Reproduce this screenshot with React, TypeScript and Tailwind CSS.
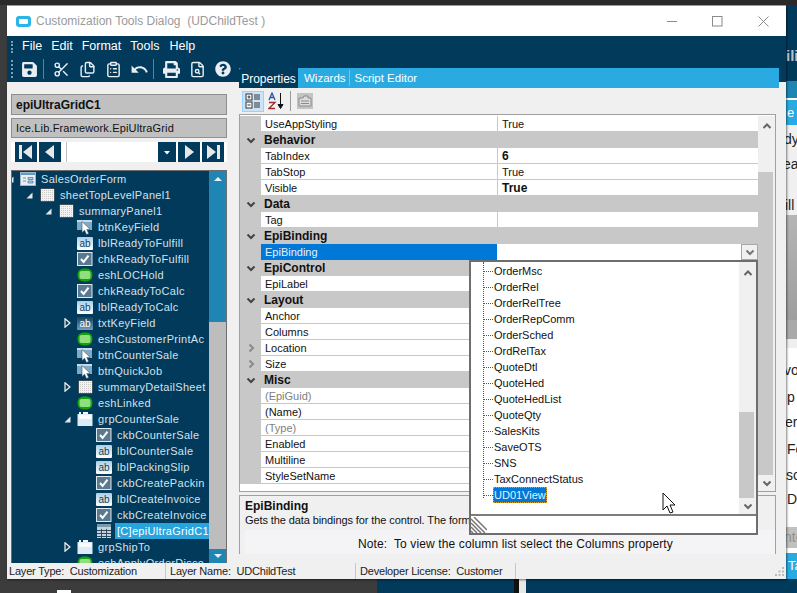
import { Scissors, Files, ClipboardList, FileSearch } from 'lucide-react';
import { FaSave, FaPrint, FaQuestionCircle } from 'react-icons/fa';
import { MdUndo } from 'react-icons/md';

type IconKind = 'form' | 'panel' | 'button' | 'label' | 'text' | 'check' | 'pill' | 'group' | 'grid';

const treeRows: { label: string; level: number; icon: IconKind; exp?: 'open' | 'closed'; selected?: boolean }[] = [
  { label: 'SalesOrderForm', level: 0, icon: 'form', exp: 'open' },
  { label: 'sheetTopLevelPanel1', level: 1, icon: 'panel', exp: 'open' },
  { label: 'summaryPanel1', level: 2, icon: 'panel', exp: 'open' },
  { label: 'btnKeyField', level: 3, icon: 'button' },
  { label: 'lblReadyToFulfill', level: 3, icon: 'label' },
  { label: 'chkReadyToFulfill', level: 3, icon: 'check' },
  { label: 'eshLOCHold', level: 3, icon: 'pill' },
  { label: 'chkReadyToCalc', level: 3, icon: 'check' },
  { label: 'lblReadyToCalc', level: 3, icon: 'label' },
  { label: 'txtKeyField', level: 3, icon: 'text', exp: 'closed' },
  { label: 'eshCustomerPrintAc', level: 3, icon: 'pill' },
  { label: 'btnCounterSale', level: 3, icon: 'button' },
  { label: 'btnQuickJob', level: 3, icon: 'button' },
  { label: 'summaryDetailSheet', level: 3, icon: 'panel', exp: 'closed' },
  { label: 'eshLinked', level: 3, icon: 'pill' },
  { label: 'grpCounterSale', level: 3, icon: 'group', exp: 'open' },
  { label: 'ckbCounterSale', level: 4, icon: 'check' },
  { label: 'lblCounterSale', level: 4, icon: 'label' },
  { label: 'lblPackingSlip', level: 4, icon: 'label' },
  { label: 'ckbCreatePackin', level: 4, icon: 'check' },
  { label: 'lblCreateInvoice', level: 4, icon: 'label' },
  { label: 'ckbCreateInvoice', level: 4, icon: 'check' },
  { label: '[C]epiUltraGridC1', level: 4, icon: 'grid', selected: true },
  { label: 'grpShipTo', level: 3, icon: 'group', exp: 'closed' },
  { label: 'eshApplyOrderDisco', level: 3, icon: 'pill' },
];

type Prop = { cat?: boolean; name: string; value?: string; bold?: boolean; muted?: boolean; more?: boolean; selected?: boolean };

const props: Prop[] = [
  { name: 'UseAppStyling', value: 'True' },
  { cat: true, name: 'Behavior' },
  { name: 'TabIndex', value: '6', bold: true },
  { name: 'TabStop', value: 'True' },
  { name: 'Visible', value: 'True', bold: true },
  { cat: true, name: 'Data' },
  { name: 'Tag' },
  { cat: true, name: 'EpiBinding' },
  { name: 'EpiBinding', selected: true },
  { cat: true, name: 'EpiControl' },
  { name: 'EpiLabel' },
  { cat: true, name: 'Layout' },
  { name: 'Anchor' },
  { name: 'Columns' },
  { name: 'Location', more: true },
  { name: 'Size', more: true },
  { cat: true, name: 'Misc' },
  { name: '(EpiGuid)', muted: true },
  { name: '(Name)' },
  { name: '(Type)', muted: true },
  { name: 'Enabled' },
  { name: 'Multiline' },
  { name: 'StyleSetName' },
];

const views = [
  'OrderMsc', 'OrderRel', 'OrderRelTree', 'OrderRepComm', 'OrderSched', 'OrdRelTax', 'QuoteDtl',
  'QuoteHed', 'QuoteHedList', 'QuoteQty', 'SalesKits', 'SaveOTS', 'SNS', 'TaxConnectStatus',
];

function TreeIcon({ kind }: { kind: IconKind }) {
  if (kind === 'pill') {
    return (
      <svg width="16" height="14" viewBox="0 0 16 14">
        <rect x="0.5" y="0.5" width="15" height="13" rx="6" fill="#17a00e" />
        <rect x="2.5" y="3" width="11" height="8" rx="2" fill="#8fe07c" />
      </svg>
    );
  }
  if (kind === 'check') {
    return (
      <svg width="16" height="14" viewBox="0 0 16 14">
        <rect x="0.5" y="0.5" width="14.5" height="13" fill="#5c7a8f" stroke="#dfe9f0" />
        <path d="M4 7l2.6 3L11.5 3.6" fill="none" stroke="#fff" strokeWidth="2" />
      </svg>
    );
  }
  if (kind === 'label' || kind === 'text') {
    return (
      <svg width="16" height="13" viewBox="0 0 16 13">
        <defs>
          <linearGradient id="lbl" x1="0" y1="0" x2="0" y2="1">
            <stop offset="0" stopColor="#a9cfe6" />
            <stop offset="1" stopColor="#ffffff" />
          </linearGradient>
          <linearGradient id="txt" x1="0" y1="0" x2="0" y2="1">
            <stop offset="0" stopColor="#17425f" />
            <stop offset="1" stopColor="#6e9fbd" />
          </linearGradient>
        </defs>
        <rect width="16" height="13" rx="1" fill={kind === 'label' ? 'url(#lbl)' : 'url(#txt)'} />
        <text x="8" y="10" textAnchor="middle" fontSize="10" fontFamily="Liberation Sans" fill={kind === 'label' ? '#123f5c' : '#fff'}>ab</text>
      </svg>
    );
  }
  if (kind === 'button') {
    return (
      <svg width="16" height="15" viewBox="0 0 16 15">
        <rect x="0" y="0" width="15" height="10" fill="#7fa9c4" />
        <rect x="0" y="0" width="15" height="2" fill="#c4dbe9" />
        <path d="M5 1.5l0 11 2.6-2.2 1.9 4.2 2.2-1-1.9-4 3.2-.4z" fill="#fff" stroke="#36566b" strokeWidth=".6" />
      </svg>
    );
  }
  if (kind === 'panel') {
    return (
      <svg width="15" height="14" viewBox="0 0 15 14">
        <defs>
          <pattern id="chk" width="2" height="2" patternUnits="userSpaceOnUse">
            <rect width="2" height="2" fill="#f2f2f2" />
            <rect width="1" height="1" fill="#c9c9c9" />
          </pattern>
        </defs>
        <rect x="0.5" y="0.5" width="14" height="13" fill="url(#chk)" stroke="#111" strokeDasharray="1 1" />
      </svg>
    );
  }
  if (kind === 'group') {
    return (
      <svg width="16" height="14" viewBox="0 0 16 14">
        <rect x="0.5" y="2" width="15" height="12" fill="#dcebf5" />
        <rect x="1.5" y="3" width="13" height="4" fill="#f8fbfd" />
        <path d="M2 0h2v2H2zM6 0h5v2H6z" fill="#f0f6fa" />
      </svg>
    );
  }
  if (kind === 'grid') {
    return (
      <svg width="14" height="14" viewBox="0 0 14 14">
        <rect width="14" height="14" fill="#c5d2da" />
        <rect y="0" width="14" height="3" fill="#7e98a8" />
        <path d="M0 6.5h14M0 9.5h14M0 12.5h14M4.5 5v9M9.5 5v9" stroke="#2b4a5e" strokeWidth="1" />
      </svg>
    );
  }
  return (
    <svg width="16" height="14" viewBox="0 0 16 14">
      <rect x="0.5" y="0.5" width="15" height="13" fill="#e8eef2" stroke="#9eb3c2" />
      <rect x="1" y="1" width="14" height="2" fill="#5d9ccb" />
      <path d="M3 6h3M3 9h3M8 5.5h5v2H8zM8 9h5v2H8z" fill="#b7cfe0" stroke="#4d84ad" strokeWidth=".8" />
    </svg>
  );
}

function Expander({ state }: { state?: 'open' | 'closed' }) {
  if (state === 'open') {
    return (
      <svg width="7" height="7" viewBox="0 0 7 7">
        <path d="M6.5 0.5v6h-6z" fill="#e4e4e4" />
      </svg>
    );
  }
  if (state === 'closed') {
    return (
      <svg width="7" height="10" viewBox="0 0 7 10">
        <path d="M1 .8L6 5 1 9.2z" fill="#123f5c" stroke="#f2f2f2" strokeWidth="1.2" />
      </svg>
    );
  }
  return null;
}

function Chevron({ dir, color = '#666', size = 10 }: { dir: 'up' | 'down' | 'right'; color?: string; size?: number }) {
  const d = dir === 'up' ? 'M1.5 7L5 3.5 8.5 7' : dir === 'down' ? 'M1.5 3.5L5 7 8.5 3.5' : 'M3.5 1.5L7 5 3.5 8.5';
  return (
    <svg width={size} height={size} viewBox="0 0 10 10">
      <path d={d} fill="none" stroke={color} strokeWidth="2" />
    </svg>
  );
}

function NavButton({ d, bar }: { d: string; bar?: 'left' | 'right' }) {
  return (
    <div className="flex h-5 w-[22px] items-center justify-center bg-[#023a5c]">
      <svg width="14" height="14" viewBox="0 0 14 14">
        {bar === 'left' && <rect x="0" y="0" width="3" height="14" fill="#e8e8e8" />}
        {bar === 'right' && <rect x="11" y="0" width="3" height="14" fill="#e8e8e8" />}
        <path d={d} fill="#e8e8e8" />
      </svg>
    </div>
  );
}

function ToolButton({ children }: { children: React.ReactNode }) {
  return <div className="flex h-[26px] w-[26px] items-center justify-center text-[#e8eef2]">{children}</div>;
}

function Grip({ className }: { className: string }) {
  return <div className={`w-[2px] border-l-2 border-dotted border-[#7f9db0] ${className}`} />;
}

function TreePanel() {
  return (
    <div className="mt-2 flex min-h-0 flex-1 overflow-hidden border border-b-0 border-[#6d6d6d] bg-[#023a5c]">
      <div className="min-w-0 flex-1 overflow-hidden">
        {treeRows.map((row) => (
          <div
            key={row.label}
            className="flex h-4 shrink-0 items-center whitespace-nowrap"
            style={{ marginLeft: row.level * 19 - 5 }}
          >
            <div className="flex w-[13px] shrink-0 items-center"><Expander state={row.exp} /></div>
            <div className="flex w-4 shrink-0 justify-center"><TreeIcon kind={row.icon} /></div>
            <span
              className={`ml-[3px] flex h-4 items-center px-[2px] text-[11px] tracking-[0.3px] text-[#d3e1e9] ${row.selected ? 'w-[110px] bg-[#29a3dc] text-white' : ''}`}
            >
              {row.label}
            </span>
          </div>
        ))}
      </div>
      <div className="flex w-[17px] shrink-0 flex-col bg-[#bdbdbd]">
        <div className="flex h-[151px] justify-center bg-[#1f86b4] pt-[4px]">
          <svg width="10" height="8" viewBox="0 0 10 8"><path d="M1 6L5 2l4 4z" fill="#e8f2f7" /></svg>
        </div>
        <div className="flex-1" />
        <div className="flex h-[14px] items-center justify-center bg-[#1f86b4]">
          <svg width="10" height="8" viewBox="0 0 10 8"><path d="M1 2l4 4 4-4z" fill="#e8f2f7" /></svg>
        </div>
      </div>
    </div>
  );
}

function LeftPanel() {
  return (
    <div className="flex w-[232px] shrink-0 flex-col">
      <div className="flex h-[26px] items-center bg-[#023a5c] pl-1">
        <Grip className="h-[18px]" />
        <div className="ml-[3px] flex items-center">
          <ToolButton><FaSave size={17} /></ToolButton>
          <div className="mx-[1px] h-[20px] w-px bg-[#5f8096]" />
          <div className="w-[3px]" />
          <ToolButton><Scissors size={17} /></ToolButton>
          <ToolButton><Files size={17} /></ToolButton>
          <ToolButton><ClipboardList size={17} /></ToolButton>
          <ToolButton><MdUndo size={19} /></ToolButton>
          <div className="mx-[1px] h-[20px] w-px bg-[#5f8096]" />
          <div className="w-[3px]" />
          <ToolButton><FaPrint size={17} /></ToolButton>
          <ToolButton><FileSearch size={17} /></ToolButton>
          <ToolButton><FaQuestionCircle size={16} /></ToolButton>
        </div>
      </div>
      <div className="flex min-h-0 flex-1 flex-col bg-[#f0f0f0] pl-1 pr-3 pt-3">
        <div className="flex h-[21px] shrink-0 items-center border border-[#8f8f8f] bg-[#c0c0c0] pl-1 text-[12px] font-bold text-[#111]">epiUltraGridC1</div>
        <div className="mt-[3px] flex h-5 shrink-0 items-center border border-[#8f8f8f] bg-[#c0c0c0] pl-1 text-[11px] tracking-[0.15px] text-[#111]">Ice.Lib.Framework.EpiUltraGrid</div>
        <div className="mt-1 flex h-5 shrink-0 items-center gap-[2px] bg-white pl-1">
          <NavButton bar="left" d="M13 0v14L4 7z" />
          <NavButton d="M11 0v14L2 7z" />
          <div className="ml-[3px] h-5 w-[92px] border-l border-[#c0c0c0] bg-white" />
          <div className="-ml-[2px] flex h-5 w-[18px] items-center justify-center bg-[#023a5c]">
            <svg width="8" height="5" viewBox="0 0 8 5"><path d="M1 1h6L4 4.5z" fill="#fff" /></svg>
          </div>
          <NavButton d="M3 0v14l9-7z" />
          <NavButton bar="right" d="M1 0v14l9-7z" />
        </div>
        <TreePanel />
      </div>
    </div>
  );
}

function PropRow({ row }: { row: Prop }) {
  if (row.cat) {
    return (
      <div className="flex h-4 shrink-0 items-center bg-[#c8c8c8]">
        <div className="flex w-[21px] shrink-0 justify-center"><Chevron dir="down" color="#444" /></div>
        <span className="pl-[3px] text-[12px] font-bold text-[#111]">{row.name}</span>
      </div>
    );
  }
  return (
    <div className="flex h-4 shrink-0 items-stretch">
      <div className="flex w-[21px] shrink-0 items-center justify-center bg-[#c8c8c8]">
        {row.more && <Chevron dir="right" color="#8a8a8a" />}
      </div>
      <div className={`flex w-[236px] shrink-0 items-center pl-1 text-[11px] ${row.selected ? 'bg-[#0078d7] text-[#e6f1fb]' : `border-b border-[#c8c8c8] pt-px ${row.muted ? 'text-[#808080]' : 'text-[#111]'}`}`}>
        {row.name}
      </div>
      {row.selected ? (
        <div className="flex flex-1 justify-end">
          <div className="flex h-4 w-[17px] items-center justify-center border border-[#a8a8a8] bg-[#f0f0f0]">
            <Chevron dir="down" color="#777" />
          </div>
        </div>
      ) : (
        <div className={`flex flex-1 items-center border-b border-l border-[#c8c8c8] pl-1 pt-px text-[#111] ${row.bold ? 'text-[12px] font-bold' : 'text-[11px]'}`}>
          {row.value}
        </div>
      )}
    </div>
  );
}

function PropertyGrid() {
  return (
    <div className="flex h-[378px] w-[537px] shrink-0 border border-[#a0a0a0] bg-white pt-px">
      <div className="flex min-w-0 flex-1 flex-col overflow-hidden">
        {props.map((row, i) => <PropRow key={i} row={row} />)}
      </div>
      <div className="flex w-[17px] shrink-0 flex-col bg-[#f0f0f0]">
        <div className="flex h-[16px] items-center justify-center pt-1"><Chevron dir="up" /></div>
        <div className="h-[40px]" />
        <div className="w-[15px] flex-1 bg-[#c8c8c8]" />
        <div className="flex h-[16px] items-center justify-center"><Chevron dir="down" /></div>
      </div>
    </div>
  );
}

function ViewDropdown() {
  return (
    <div className="absolute left-[462px] top-[254px] flex h-[275px] w-[289px] flex-col border-2 border-[#6e6e6e] bg-white">
      <div className="flex min-h-0 flex-1 border-b-2 border-[#7c7c7c]">
        <div className="relative min-w-0 flex-1 overflow-hidden pt-[1px]">
          <div className="absolute bottom-[16px] left-[12px] top-0 border-l border-dotted border-[#555]" />
          {views.map((v) => (
            <div key={v} className="flex h-4 items-center pl-[12px] text-[11px] text-[#111]">
              <div className="w-[10px] border-t border-dotted border-[#555]" />
              <span className="pl-px">{v}</span>
            </div>
          ))}
          <div className="relative flex h-4 items-center pl-[12px] text-[11px]">
            <div className="w-[10px] border-t border-dotted border-[#555]" />
            <span className="border border-dotted border-[#e0a030] bg-[#0078d7] leading-[14px] text-[#e6f1fb]">UD01View</span>
          </div>
        </div>
        <div className="flex w-[17px] shrink-0 flex-col bg-[#f0f0f0]">
          <div className="h-[6px]" />
          <div className="flex h-[10px] justify-center"><Chevron dir="up" /></div>
          <div className="h-[134px]" />
          <div className="h-[86px] w-[15px] bg-[#c8c8c8]" />
          <div className="flex flex-1 items-center justify-center"><Chevron dir="down" /></div>
        </div>
      </div>
      <div className="flex h-[17px] shrink-0 items-end">
        <svg width="16" height="16" viewBox="0 0 16 16">
          <path d="M0 2L14 16M0 6L10 16M0 10L6 16M0 14L2 16M3 0L16 13" stroke="#777" strokeWidth="1.5" />
        </svg>
      </div>
    </div>
  );
}

function MainCursor() {
  return (
    <svg className="absolute left-[655px] top-[486px]" width="15" height="23" viewBox="0 0 15 23">
      <path d="M1 1v17l4-4 3 7 3-1-3-7h5z" fill="#fff" stroke="#111" strokeWidth="1" />
    </svg>
  );
}

function RightPanel() {
  return (
    <div className="flex min-w-0 flex-1 flex-col">
      <div className="h-3 shrink-0 bg-[#023a5c]" />
      <div className="flex h-5 shrink-0 bg-[#f0f0f0]">
        <div className="flex w-[540px] shrink-0 items-center bg-[#29abe2] text-[12px] text-white">
          <div className="flex h-5 w-[59px] items-center justify-center rounded-tl-[3px] bg-[#023a5c] pt-px">Properties</div>
          <span className="pl-[6px] pr-[3px] pt-px text-[11.5px]">Wizards</span>
          <div className="h-4 w-px bg-[#d8a878]" />
          <span className="pl-[5px] pt-px text-[11.5px]">Script Editor</span>
        </div>
        <div className="flex-1 bg-[linear-gradient(#023a5c_70%,#f0f0f0_70%)]" />
      </div>
      <div className="flex h-[26px] shrink-0 items-center bg-[#f0f0f0] pl-[3px]">
        <div className="flex h-[21px] w-[22px] items-center justify-center border border-[#99d1ff] bg-[#cce4f7]">
          <svg width="16" height="16" viewBox="0 0 16 16">
            <rect x="1" y="1" width="6" height="6" fill="#fff" stroke="#333" />
            <rect x="1" y="9" width="6" height="6" fill="#fff" stroke="#333" />
            <path d="M2.5 4h3M4 2.5v3M2.5 12h3M9 2h6M9 4h6M9 6h6M9 10h6M9 12h6M9 14h6" stroke="#333" />
          </svg>
        </div>
        <div className="ml-[3px] flex w-[20px] items-center justify-center">
          <svg width="18" height="18" viewBox="0 0 18 18">
            <path d="M1 8L4 1l3 7M2 5.5h4" fill="none" stroke="#2b56a6" strokeWidth="1.3" />
            <path d="M1 10.5h6l-6 6h6" fill="none" stroke="#9c2b2b" strokeWidth="1.3" />
            <path d="M12.5 1v14M10 12.5l2.5 4 2.5-4z" fill="#111" stroke="#111" />
          </svg>
        </div>
        <div className="ml-[3px] h-[20px] w-px bg-[#9a9a9a]" />
        <div className="ml-[6px] flex h-[16px] w-[16px] items-center justify-center bg-[#c4c4c4]">
          <svg width="14" height="12" viewBox="0 0 14 12">
            <path d="M1 3h4l1-2h4v2h3v8H1z" fill="#dcdcdc" stroke="#8a8a8a" />
            <path d="M3 6h8M3 8.5h8" stroke="#8a8a8a" />
          </svg>
        </div>
      </div>
      <PropertyGrid />
      <div className="mt-[3px] flex h-[59px] w-[537px] shrink-0 flex-col border border-b-0 border-[#a0a0a0] pl-[5px]">
        <div className="h-[15px] pt-[3px] text-[12px] font-bold leading-[14px] text-[#111]">EpiBinding</div>
        <div className="mt-[2px] h-[14px] overflow-hidden whitespace-nowrap text-[11px] leading-[14px] tracking-[-0.1px] text-[#111]">Gets the data bindings for the control. The format</div>
        <div className="mt-[3px] flex flex-1 items-center bg-[#f4f4f7] pl-[113px] pt-[3px] text-[12px] tracking-[0.12px] text-[#111]">
          Note:&nbsp; To view the column list select the Columns property
        </div>
      </div>
    </div>
  );
}

function StatusBar() {
  return (
    <div className="flex h-4 shrink-0 items-center whitespace-nowrap bg-[#f0f0f0] text-[11px] tracking-[-0.2px] text-[#222]">
      <div className="w-[159px] border-r border-[#c8c8c8] pl-[2px]">Layer Type:&nbsp; Customization</div>
      <div className="w-[190px] border-r border-[#c8c8c8] pl-[4px]">Layer Name:&nbsp; UDChildTest</div>
      <div className="w-[160px] border-r border-[#c8c8c8] pl-[4px]">Developer License:&nbsp; Customer</div>
      <div className="flex-1" />
      <svg className="mr-px" width="10" height="10" viewBox="0 0 10 10">
        <path d="M7 1h2v2H7zM7 4.5h2v2H7zM7 8h2v2H7zM3.5 4.5h2v2h-2zM3.5 8h2v2h-2zM0 8h2v2H0z" fill="#bbb" />
      </svg>
    </div>
  );
}

function BackWindowSliver() {
  return (
    <div className="absolute left-[786px] top-[5px] flex h-[574px] w-[11px] flex-col overflow-hidden whitespace-nowrap bg-white text-[13px] text-[#222]">
      <div className="flex h-[76px] shrink-0 items-end overflow-hidden bg-[#023a5c] pb-[14px] text-[15px] font-bold text-[#b9c3ca]">ili</div>
      <div className="h-[17px] shrink-0 bg-[#1f86b4]" />
      <div className="h-[2px] shrink-0 bg-white" />
      <div className="flex h-[25px] shrink-0 items-center bg-[#29abe2] pl-px text-white">e</div>
      <div className="flex h-[90px] shrink-0 flex-col bg-[#f0f0f0]">
        <span className="-ml-[2px] mt-[4px] text-[14px]">dy</span>
        <span className="-ml-[3px] mt-[4px] text-[14px]">ea</span>
        <span className="-ml-[1px] mt-[20px] text-[14px]">ill</span>
      </div>
      <div className="h-[105px] shrink-0 bg-[linear-gradient(#b5b5b5,#9e9e9e)]" />
      <div className="h-[19px] shrink-0 bg-[#a9a9a9]" />
      <div className="h-[9px] shrink-0 bg-[#efefef]" />
      <div className="flex min-h-0 flex-1 flex-col bg-white pl-px text-[14px]">
        <span className="mt-[12px] -ml-[3px]">vo</span>
        <span className="mt-[6px]">p V</span>
        <span className="mt-[4px] -ml-[2px]">ern</span>
        <span className="mt-[6px]">Fo</span>
        <span className="mt-[5px] -ml-[1px]">sc</span>
        <span className="mt-[3px]">Di</span>
        <span className="mt-[17px] -ml-[3px] bg-[#c0c0c0] text-[#8f8f8f]">nte</span>
      </div>
      <div className="flex h-[26px] shrink-0 items-center bg-[#29abe2] pl-[2px] text-white">Ta</div>
    </div>
  );
}

function BottomStrip() {
  return (
    <div className="absolute bottom-0 left-0 flex h-[14px] w-full">
      <div className="relative w-[377px] shrink-0 bg-[#3c3c3c]">
        <div className="absolute bottom-0 left-[57px] h-[3px] w-[14px] bg-white" />
      </div>
      <div className="w-[137px] shrink-0 bg-[#023a5c]" />
      <div className="w-[5px] shrink-0 bg-[#111]" />
      <div className="w-[7px] shrink-0 bg-[#e8e8e8]" />
      <div className="flex-1 bg-[#023a5c]" />
    </div>
  );
}

export default function App() {
  return (
    <div className="relative h-[593px] w-[797px] overflow-hidden bg-[#3c3c3c] font-['Liberation_Sans',sans-serif]">
      <div className="h-[5px] bg-[#2a2a2a]" />
      <BackWindowSliver />
      <BottomStrip />

      <div className="absolute left-[7px] top-[5px] flex h-[574px] w-[779px] flex-col border-t border-[#9a9a9a] bg-[#f0f0f0] shadow-[1px_1px_2px_rgba(0,0,0,0.5)]">
        <div className="flex h-[30px] shrink-0 items-center bg-white pl-[9px]">
          <div className="flex h-[11px] w-[15px] items-center justify-center rounded-[3px] bg-[#29b6e6]">
            <div className="h-[5px] w-[9px] rounded-[1px] bg-white" />
          </div>
          <span className="ml-[5px] text-[12px] text-[#9a9a9a]">Customization Tools Dialog&nbsp; (UDChildTest )</span>
          <div className="flex-1" />
          <svg className="mr-[34px]" width="11" height="11" viewBox="0 0 11 11"><path d="M0 5.5h10" stroke="#8a8a8a" /></svg>
          <svg className="mr-[35px]" width="11" height="11" viewBox="0 0 11 11"><rect x="0.5" y="0.5" width="9.5" height="9.5" fill="none" stroke="#8a8a8a" /></svg>
          <svg className="mr-[17px]" width="11" height="11" viewBox="0 0 11 11"><path d="M0.5 0.5l10 10M10.5 0.5l-10 10" stroke="#8a8a8a" /></svg>
        </div>
        <div className="flex h-5 shrink-0 items-center bg-[#023a5c] pl-1 pt-px text-[12.5px] text-white">
          <Grip className="h-3" />
          <span className="ml-[9px]">File</span>
          <span className="ml-[9px]">Edit</span>
          <span className="ml-[9px]">Format</span>
          <span className="ml-[9px]">Tools</span>
          <span className="ml-[10px]">Help</span>
        </div>
        <div className="flex min-h-0 flex-1">
          <LeftPanel />
          <RightPanel />
        </div>
        <StatusBar />
        <ViewDropdown />
        <MainCursor />
      </div>
    </div>
  );
}
